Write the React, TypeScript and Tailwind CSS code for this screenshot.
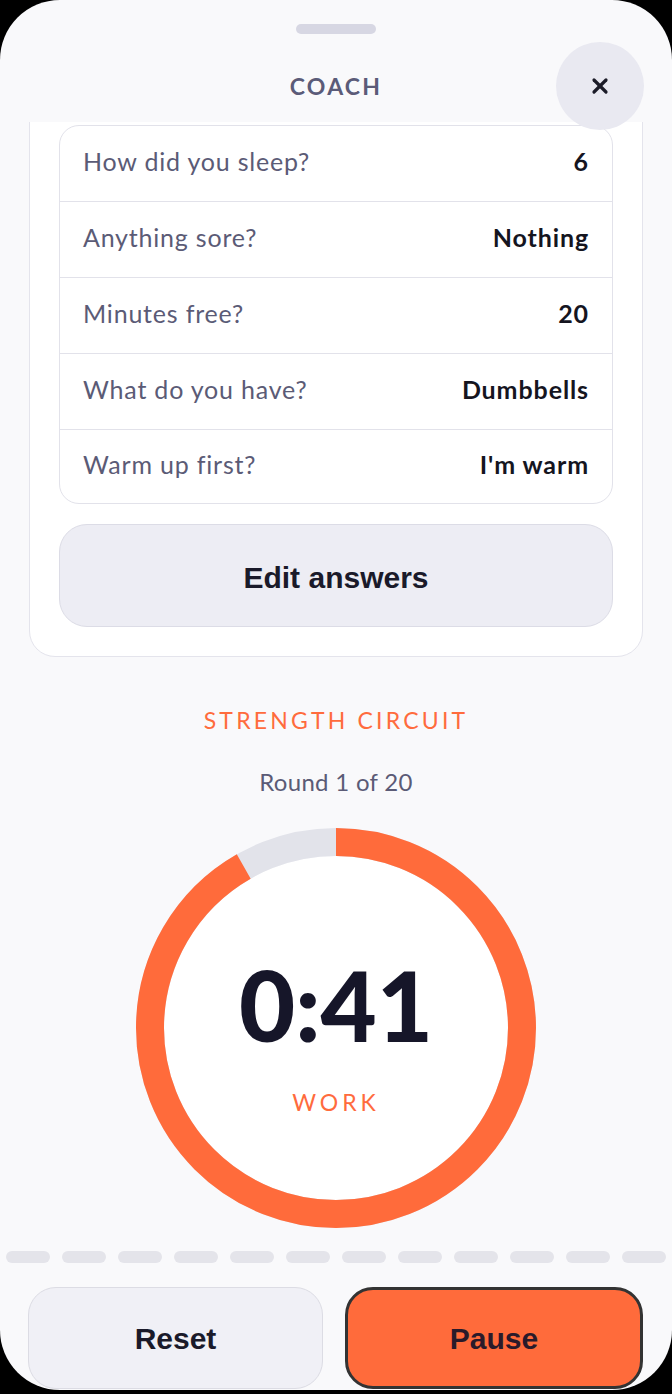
import { X } from 'lucide-react';

const answers = [
  { q: 'How did you sleep?', a: '6' },
  { q: 'Anything sore?', a: 'Nothing' },
  { q: 'Minutes free?', a: '20' },
  { q: 'What do you have?', a: 'Dumbbells' },
  { q: 'Warm up first?', a: "I'm warm" },
];

const R = 186;
const CIRC = 2 * Math.PI * R;
const progress = 0.917;

export default function App() {
  return (
    <div className="w-[672px] h-[1394px] bg-black font-['Lato',sans-serif]">
      <div className="relative flex flex-col h-[1390px] rounded-[60px] bg-[#f9f9fb]">
        {/* grab handle */}
        <div className="mt-[24px] mx-auto w-[80px] h-[10px] rounded-full bg-[#d7d7e3]" />

        <header className="h-[88px] pt-[16px] flex items-center justify-center">
          <h1 className="text-[23px] font-bold tracking-[2.2px] text-[#5b5b78]">COACH</h1>
        </header>

        <button
          aria-label="Close"
          className="absolute z-10 top-[42px] left-[556px] w-[88px] h-[88px] rounded-full bg-[#e9e9f1] flex items-center justify-center text-[#1c1c28]"
        >
          <X className="w-[24px] h-[24px]" strokeWidth={3.2} />
        </button>

        <div className="overflow-hidden">
          <section className="-mt-[27px] mx-[29px] rounded-[26px] border border-[#e4e4ec] bg-white px-[29px] pt-[29px] pb-[29px]">
            <div className="rounded-[20px] border border-[#e2e2ea] overflow-hidden">
              {answers.map((row, i) => (
                <div
                  key={row.q}
                  className={`px-[23px] pb-[3px] flex items-center justify-between ${
                    i < answers.length - 1 ? 'h-[76px] border-b border-[#e2e2ea]' : 'h-[73px]'
                  }`}
                >
                  <span className="text-[25px] tracking-[0.8px] text-[#5b5b76]">{row.q}</span>
                  <span className="text-[25px] tracking-[0.9px] font-bold text-[#15151f]">{row.a}</span>
                </div>
              ))}
            </div>
            <button className="mt-[20px] pt-[4px] w-full h-[103px] rounded-[28px] bg-[#ededf4] border border-[#dcdce6] font-['Liberation_Sans',Arial,sans-serif] text-[30px] font-bold text-[#1a1a2a]">
              Edit answers
            </button>
          </section>

          <div className="flex flex-col items-center">
            <p className="mt-[49px] leading-[28px] text-[23px] tracking-[3.2px] text-[#ff6b3d]">STRENGTH CIRCUIT</p>
            <p className="mt-[34px] leading-[28px] text-[24px] tracking-[0.3px] text-[#5b5b76]">Round 1 of 20</p>

            <div className="relative mt-[32px] w-[400px] h-[400px]">
              <svg width="400" height="400" viewBox="0 0 400 400">
                <circle cx="200" cy="200" r="172" fill="#ffffff" />
                <circle cx="200" cy="200" r={R} fill="none" stroke="#e2e3ea" strokeWidth="28" />
                <circle
                  cx="200"
                  cy="200"
                  r={R}
                  fill="none"
                  stroke="#ff6b3b"
                  strokeWidth="28"
                  strokeDasharray={`${CIRC * progress} ${CIRC}`}
                  transform="rotate(-90 200 200)"
                />
              </svg>
              <div className="absolute inset-0 flex flex-col items-center pt-[128px]">
                <span className="text-[97px] leading-none font-black text-[#161629]">0:41</span>
                <span className="mt-[35px] leading-[28px] text-[23px] tracking-[4px] text-[#ff6b3d]">WORK</span>
              </div>
            </div>
          </div>
        </div>

        <div className="mt-[23px] px-[6px] flex gap-[12px]">
          {Array.from({ length: 12 }).map((_, i) => (
            <div key={i} className="w-[44px] h-[12px] rounded-full bg-[#e4e4ea]" />
          ))}
        </div>

        <div className="mt-[24px] pl-[28px] grid grid-cols-[295px_298px] gap-[22px] font-['Liberation_Sans',Arial,sans-serif]">
          <button className="h-[102px] rounded-[28px] bg-[#f0f0f6] border border-[#dcdce4] text-[30px] font-bold text-[#1a1a2a]">
            Reset
          </button>
          <button className="h-[102px] rounded-[28px] bg-[#ff6b3b] border-[3px] border-[#333333] text-[30px] font-bold text-[#2a1a2a]">
            Pause
          </button>
        </div>
      </div>
    </div>
  );
}
